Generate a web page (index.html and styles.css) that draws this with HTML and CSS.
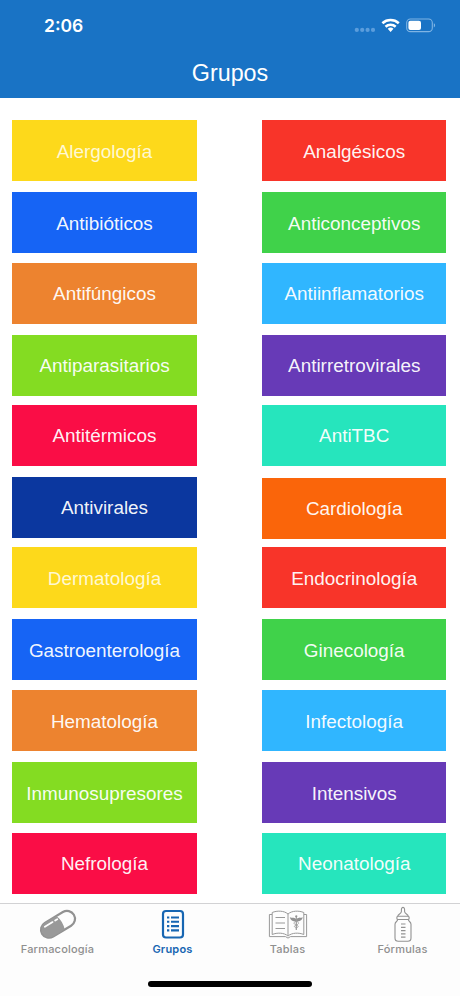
FILE: index.html
```html
<!DOCTYPE html>
<html lang="es">
<head>
<meta charset="utf-8">
<meta name="viewport" content="width=device-width, initial-scale=1">
<title>Grupos</title>
<link rel="stylesheet" href="styles.css">
</head>
<body>
<div class="app">
  <header class="header">
    <div class="status">
      <span class="time">2:06</span>
      <svg class="indicators" width="84" height="20" viewBox="0 0 84 20" fill="none">
        <g fill="#5b9ddc"><circle cx="4.8" cy="13.9" r="2.1"/><circle cx="10.2" cy="13.9" r="2.1"/><circle cx="15.6" cy="13.9" r="2.1"/><circle cx="21" cy="13.9" r="2.1"/></g>
        <g stroke="#fff" stroke-width="2.6"><path d="M30.4 7.2a12.3 12.3 0 0 1 16.4 0"/><path d="M33.5 10.7a7.7 7.7 0 0 1 10.2 0"/></g>
        <path d="M35.7 12.8a4.3 4.3 0 0 1 5.8 0L38.6 16z" fill="#fff"/>
        <rect x="54.7" y="3" width="25.6" height="12.6" rx="3.7" stroke="#7fb4e4" stroke-width="1.1"/>
        <path d="M81.8 7.3v4.2c1.8-.7 1.8-3.5 0-4.2z" fill="#7fb4e4"/>
        <rect x="56.4" y="4.7" width="12.6" height="9.2" rx="2" fill="#fff"/>
      </svg>
    </div>
    <h1 class="title">Grupos</h1>
  </header>
  <main class="groups">
    <a class="tile yellow">Alergología</a><a class="tile red">Analgésicos</a>
    <a class="tile blue">Antibióticos</a><a class="tile green">Anticonceptivos</a>
    <a class="tile orange">Antifúngicos</a><a class="tile sky">Antiinflamatorios</a>
    <a class="tile lime">Antiparasitarios</a><a class="tile purple">Antirretrovirales</a>
    <a class="tile crimson">Antitérmicos</a><a class="tile teal">AntiTBC</a>
    <a class="tile navy">Antivirales</a><a class="tile amber">Cardiología</a>
    <a class="tile yellow">Dermatología</a><a class="tile red">Endocrinología</a>
    <a class="tile blue">Gastroenterología</a><a class="tile green">Ginecología</a>
    <a class="tile orange">Hematología</a><a class="tile sky">Infectología</a>
    <a class="tile lime">Inmunosupresores</a><a class="tile purple">Intensivos</a>
    <a class="tile crimson">Nefrología</a><a class="tile teal">Neonatología</a>
  </main>
  <footer class="footer">
    <nav class="tabs">
      <a class="tab">
        <svg width="42" height="38" viewBox="0 0 42 38" fill="none">
          <g transform="translate(21 20.3) rotate(-31)">
            <rect x="-18.5" y="-8" width="37" height="16" rx="8" stroke="#929292" stroke-width="2.2"/>
            <path d="M3 -8H-10A8 8 0 0 0 -10 8H3Q6 0 3 -8z" fill="#999"/>
            <path d="M-12.5 -4.7H-3.5M-.5 -4.7H2" stroke="#fff" stroke-width="1.8" stroke-linecap="round"/>
          </g>
        </svg>
        <span>Farmacología</span>
      </a>
      <a class="tab active">
        <svg width="30" height="38" viewBox="0 0 30 38" fill="none" stroke="#1766b2">
          <rect x="5" y="7" width="20" height="26.5" rx="3" stroke-width="2.2"/>
          <path d="M9 13.5h2.3M9 17.8h2.3M9 22.1h2.3M9 26.4h2.3" stroke-width="2.1"/>
          <path d="M13 13.5h8M13 17.8h8M13 22.1h8M13 26.4h8" stroke-width="2.1"/>
        </svg>
        <span>Grupos</span>
      </a>
      <a class="tab">
        <svg width="40" height="38" viewBox="0 0 40 38" fill="none" stroke="#999" stroke-width="1">
          <path d="M20 10C16 6.5 9 6.5 4.2 8.5V30.5C9 28.5 16 28.5 20 32C24 28.5 31 28.5 35.8 30.5V8.5C31 6.5 24 6.5 20 10zM20 10V31"/>
          <path d="M4 10.5H1.4V32.6H17.5Q20 35.6 22.5 32.6H38.6V10.5H36"/>
          <path d="M7.5 13.5h9.5M7.5 19h9.5M7.5 24.5h9.5" stroke-width="1.2"/>
          <path d="M28.3 12V26" stroke-width="1.2"/><circle cx="28.3" cy="12.3" r="1.1" fill="#929292" stroke="none"/>
          <path d="M28 15C25.5 13 24 14.5 21.8 13.3C22.5 16.5 25 17.5 28 17.5zM28.6 15C31.1 13 32.6 14.5 34.8 13.3C34.1 16.5 31.6 17.5 28.6 17.5z" fill="#929292" stroke="none"/>
          <path d="M28.3 17c-3 1.5-3 3 0 4s2 2.2 0 3M28.3 17c3 1.5 3 3 0 4s-2 2.2 0 3" stroke-width=".8"/>
        </svg>
        <span>Tablas</span>
      </a>
      <a class="tab">
        <svg width="24" height="38" viewBox="0 0 24 38" fill="none" stroke="#929292" stroke-width="1.1">
          <path d="M6.8 12.2C6.9 9.9 10.3 10 10.4 7.6C10.5 6.5 9.9 3.4 12 3.4S13.5 6.5 13.6 7.6C13.7 10 17.1 9.9 17.2 12.2"/>
          <rect x="5.9" y="12.2" width="12.2" height="3.3" rx="1"/>
          <path d="M6.7 15.5C6.6 17.6 4 17.5 4 20.3V34Q4 37.3 7.3 37.3H16.7Q20 37.3 20 34V20.3C20 17.5 17.4 17.6 17.3 15.5"/>
          <path d="M10 20h4.5M10 23.3h4.5M10 26.6h4.5M10 29.9h4.5M10 33.2h4.5" stroke-width="1.2"/>
        </svg>
        <span>Fórmulas</span>
      </a>
    </nav>
    <div class="home-indicator"></div>
  </footer>
</div>
</body>
</html>
```

FILE: styles.css
```css
* { box-sizing: border-box; }

body {
  margin: 0;
  background: #fff;
  font-family: "Liberation Sans", Arial, sans-serif;
}

.app {
  width: 460px;
  height: 996px;
  display: flex;
  flex-direction: column;
  overflow: hidden;
}

.header {
  height: 98px;
  flex: none;
  background: #1973c5;
  color: #fff;
}

.status {
  height: 50px;
  padding: 16px 24px 0 44px;
  display: flex;
  justify-content: space-between;
  align-items: flex-start;
}

.time {
  font: 600 17.5px/20px Inter, sans-serif;
}

.indicators { display: block; }

.title {
  margin: 0;
  font-size: 23.3px;
  font-weight: 400;
  line-height: 46px;
  text-align: center;
}

.groups {
  height: 805px;
  flex: none;
  padding: 22.3px 13.6px 0 12.3px;
  display: grid;
  grid-template-columns: 184.4px 184.4px;
  grid-template-rows: 72px 70.3px 72px 70.3px 72px 70.3px 72px 71.3px 72px 70.3px 61px;
  justify-content: space-between;
  align-items: start;
}

.tile {
  height: 61px;
  padding-top: 2px;
  display: flex;
  align-items: center;
  justify-content: center;
  color: rgba(255, 255, 255, .96);
  font-size: 18.9px;
}

.yellow { background: #fdd91b; color: #fff8d2; }
.red { background: #f83429; }
.blue { background: #1664f5; }
.green { background: #40d24a; }
.orange { background: #ed832f; }
.sky { background: #30b6ff; }
.lime { background: #84dc22; }
.purple { background: #673ab7; }
.crimson { background: #fa0d46; }
.teal { background: #26e5bd; }
.navy { background: #0b379f; }
.amber { background: #fa650a; margin-top: 1px; }

.footer {
  height: 93px;
  flex: none;
  border-top: 1px solid #d2d2d4;
  background: #fdfdfd;
}

.tabs {
  display: grid;
  grid-template-columns: repeat(4, 115px);
}

.tab {
  display: flex;
  flex-direction: column;
  align-items: center;
  color: #8f8f8f;
  font: 500 11px/15px Inter, sans-serif;
  letter-spacing: .2px;
}

.tab svg { display: block; }

.active { color: #1766b2; font-weight: 600; }

.home-indicator {
  width: 164px;
  height: 6px;
  margin: 24px auto 0;
  border-radius: 3px;
  background: #000;
}
```
